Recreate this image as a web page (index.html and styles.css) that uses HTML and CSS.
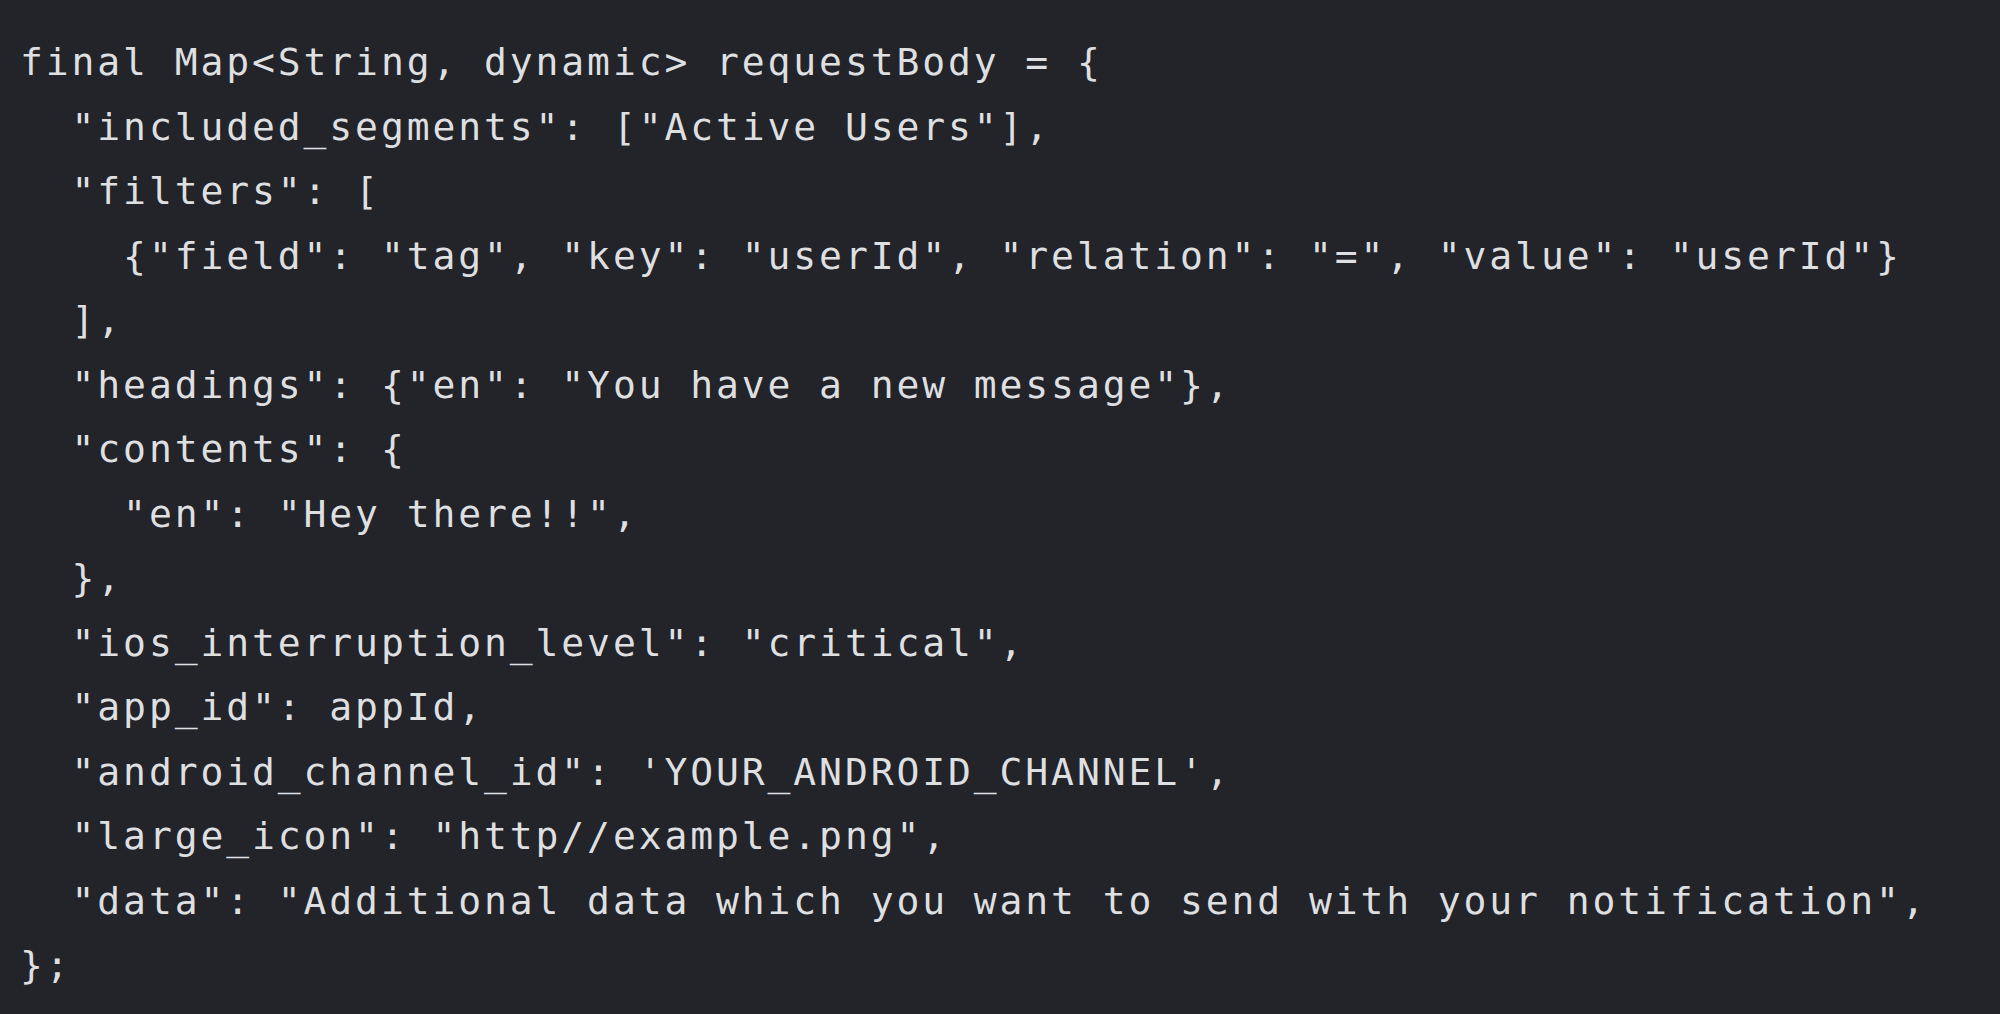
FILE: index.html
```html
<!DOCTYPE html>
<html lang="en">
<head>
<meta charset="utf-8">
<title>requestBody</title>
<link rel="stylesheet" href="styles.css">
</head>
<body>
<main class="editor">
<pre class="code"><code>final Map&lt;String, dynamic&gt; requestBody = {
  "included_segments": ["Active Users"],
  "filters": [
    {"field": "tag", "key": "userId", "relation": "=", "value": "userId"}
  ],
  "headings": {"en": "You have a new message"},
  "contents": {
    "en": "Hey there!!",
  },
  "ios_interruption_level": "critical",
  "app_id": appId,
  "android_channel_id": 'YOUR_ANDROID_CHANNEL',
  "large_icon": "http//example.png",
  "data": "Additional data which you want to send with your notification",
};</code></pre>
</main>
</body>
</html>
```
FILE: styles.css
```css
html, body {
  margin: 0;
  padding: 0;
  background: #222429;
}
.editor {
  width: 2000px;
  height: 1014px;
  background: #222429;
  overflow: hidden;
}
.code {
  margin: 0;
  padding: 30px 0 0 20px;
  font-family: "DejaVu Sans Mono", "Liberation Mono", monospace;
  font-size: 38px;
  letter-spacing: 2.9px;
  line-height: 64.5px;
  color: #dedfe0;
  white-space: pre;
}
```
